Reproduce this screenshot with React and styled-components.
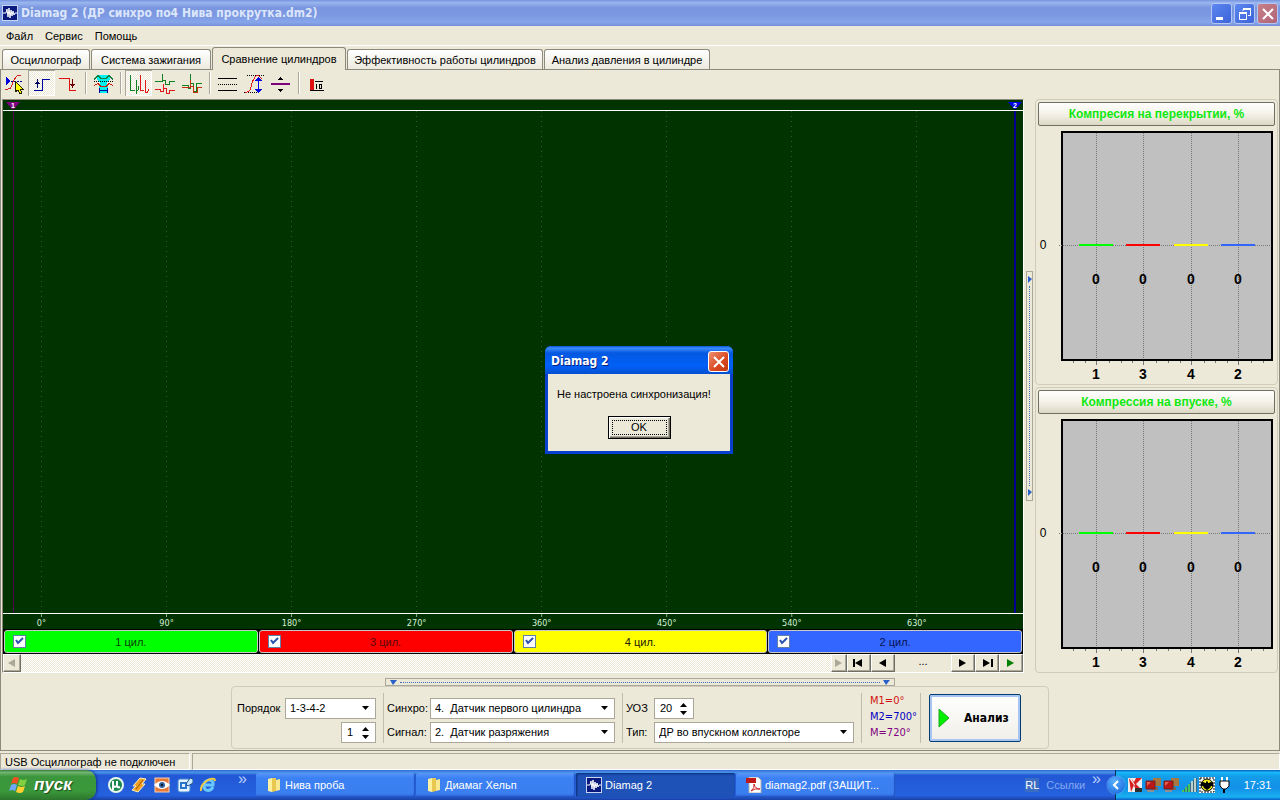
import React, { useState } from "react";
import styled, { createGlobalStyle } from "styled-components";

const tabs = [
  { name: "Осциллограф", width: 88 },
  { name: "Система зажигания", width: 120 },
  { name: "Сравнение цилиндров", width: 134 },
  { name: "Эффективность работы цилиндров", width: 196 },
  { name: "Анализ давления в цилиндре", width: 166 },
];
const cylinders = [
  { name: "1 цил.", color: "#00ff00", ink: "#064006" },
  { name: "3 цил.", color: "#ff0000", ink: "#5a0808" },
  { name: "4 цил.", color: "#ffff00", ink: "#202000" },
  { name: "2 цил.", color: "#3366ff", ink: "#0a1450" },
];
const degrees = [0, 90, 180, 270, 360, 450, 540, 630];
// share of the scope width where a given angle is drawn
const angleX = (deg) => `${3.77 + (deg / 90) * 12.26}%`;

const LogoIcon = () => (
  <svg width="16" height="16" viewBox="0 0 16 16">
    <rect width="16" height="16" fill="#c8d4f4" />
    <rect x="1" y="1" width="14" height="14" fill="#0a1a7c" />
    <path d="M1 8H4L5 4L6 12L7 3L8 13L9 5L10 11L11 6L12 10L13 8H15" fill="none" stroke="#fff" />
  </svg>
);

const toolIcons = {
  cursor: (
    <>
      <path d="M4 18H7Q10 18 11 14T15 6Q16 4 20 4" fill="none" stroke="#d02020" />
      <path d="M5 6V14L10 10Z" fill="#0000e0" />
      <path d="M10 10.5H22" stroke="#0000a0" strokeDasharray="2 1" />
      <path d="M14 10V21L17 19L19 23L21 22L19 18H22Z" fill="#ffff00" stroke="#202000" />
    </>
  ),
  rise: (
    <>
      <path d="M6 19.5H14.5V8.5H22" fill="none" stroke="#0000a0" />
      <path d="M9.5 8V17" stroke="#000060" />
      <path d="M7 13L9.5 9L12 13Z" fill="#000060" />
    </>
  ),
  fall: (
    <>
      <path d="M4 7.5H14.5V19.5H21" fill="none" stroke="#e01010" />
      <path d="M17.5 8V17" stroke="#700000" />
      <path d="M15 13L17.5 17L20 13Z" fill="#700000" />
    </>
  ),
  zone: (
    <>
      <path d="M7 4H20V8L17 12L18 16V22H9V16L10 12L7 8Z" fill="#00f0f0" />
      <path d="M4 8.5L8 4.5L11 7.5H16L19 4.5L23 8.500" fill="none" stroke="#108040" />
      <path d="M4 14.5L8 12.5L11 15.5H16L19 12.5L23 14.500" fill="none" stroke="#c02010" />
      <path d="M4 10.5H23" stroke="#000" strokeDasharray="1 1" />
      <path d="M9.5 17V22M17.5 17V22M10 19.5H17" stroke="#0000a0" />
    </>
  ),
  chain: (
    <>
      <path d="M5.5 4V19.5H10M11.5 9V23M11 19.5H13M13.5 15V19" fill="none" stroke="#108020" />
      <path d="M15.500 4V19.5H19M20.500 9V22M20 21.5H22L24 18" fill="none" stroke="#e01818" />
    </>
  ),
  stacked: (
    <>
      <path d="M3 10.5H10.5V3V9.5H13.5V13.5H17.5V10.5H23" fill="none" stroke="#108020" />
      <path d="M3 18.5H8.5V20.5H11.5V13V17.5H14.5V22.5H17.5V19.5H23" fill="none" stroke="#e01818" />
    </>
  ),
  overlay: (
    <>
      <path d="M3 14.5H9.5V17.5H11.5V3V12.5H14.5V20.5H17.5V12.5H23" fill="none" stroke="#108020" />
      <path d="M3 16.5H11.5V9V15.5H14.5V21.5H18.5V16.5H23" fill="none" stroke="#c03010" />
    </>
  ),
  lines: (
    <>
      <path d="M4 7.5H23M4 19.5H23" stroke="#000" />
      <path d="M4 13.5H23" stroke="#000" strokeDasharray="1 1" />
    </>
  ),
  amplitude: (
    <>
      <path d="M6 4.5H23M3 21.5H19" stroke="#000" strokeDasharray="1 1" />
      <path d="M4 21Q9 22 10 16T14 6Q16 2 21 8" fill="none" stroke="#e01818" />
      <path d="M17.5 8V20" stroke="#0000e0" />
      <path d="M14 10L17.500 6L21 10ZM14 18L17.500 22L21 18Z" fill="#0000e0" />
    </>
  ),
  spread: (
    <>
      <path d="M3 13H22" stroke="#800080" strokeWidth="2" />
      <path d="M10 9L12.5 6L15 9ZM10 18L12.5 21L15 18Z" fill="#000" />
    </>
  ),
  level: (
    <>
      <path d="M7 8H11V19H7Z" fill="#e01010" />
      <path d="M7 19.5H21M12 10.5H20M13.5 13V18M16.5 13.5H18.5V17.5H16.5Z" fill="none" stroke="#000" />
    </>
  ),
};
const tools = [
  ["cursor", "Курсор"],
  ["rise", "Фронт", true],
  ["fall", "Спад"],
  null,
  ["zone", "Зона"],
  null,
  ["chain", "Последовательно", true],
  ["stacked", "Раздельно"],
  ["overlay", "Наложение"],
  null,
  ["lines", "Линии"],
  ["amplitude", "Амплитуда"],
  ["spread", "Сдвиг"],
  null,
  ["level", "Уровень"],
];

const Arrow = ({ dir, color = "#000", bar }) => {
  const paths = {
    left: "M9 1V9L2 5Z",
    right: "M2 1V9L9 5Z",
    down: "M2 3H9L5.500 7Z",
    up: "M2 7H9L5.500 3Z",
  };
  return (
    <svg width="12" height="10" viewBox="0 0 12 10">
      <path d={paths[dir]} fill={color} />
      {bar && <rect x={dir === "left" ? 0 : 10} y="1" width="2" height="8" fill={color} />}
    </svg>
  );
};

const Gauge = ({ title }) => (
  <Group>
    <GaugeTitle>{title}</GaugeTitle>
    <svg width="238" height="256" viewBox="0 0 238 256" shapeRendering="crispEdges">
      <rect x="24" y="6" width="210" height="228" fill="#c0c0c0" stroke="#000" strokeWidth="2" />
      {[35, 47, 71, 83, 94, 118, 130, 142, 166, 177, 189, 213, 225].map((x) => (
        <path key={x} d={`M${x}.5 235V237`} stroke="#777" />
      ))}
      <path d="M21 119.5H233" stroke="#777" strokeDasharray="1 1" />
      <GaugeText x="5" y="123">0</GaugeText>
      {[1, 3, 4, 2].map((cyl, i) => {
        const x = 58 + Math.round(i * 47.3);
        return (
          <g key={cyl}>
            <path d={`M${x}.5 7V233`} stroke="#777" strokeDasharray="1 1" />
            <path d={`M${x}.5 235V239`} stroke="#777" />
            <rect x={x - 17} y="118" width="34" height="2" fill={cylinders[i].color} />
            <GaugeText x={x} y="158" $bold>0</GaugeText>
            <GaugeText x={x} y="253" $bold>{cyl}</GaugeText>
          </g>
        );
      })}
    </svg>
  </Group>
);

const Combo = ({ id, options, width }) => (
  <ComboBox $width={width}>
    <ComboSelect id={id}>
      {options.map((o) => (
        <option key={o}>{o}</option>
      ))}
    </ComboSelect>
    <Arrow dir="down" />
  </ComboBox>
);

const Spinner = ({ id, label, start, width }) => {
  const [value, setValue] = useState(start);
  return (
    <SpinBox $width={width}>
      <SpinInput
        id={id}
        aria-label={label}
        value={value}
        onChange={(e) => setValue(Number(e.target.value) || 0)}
      />
      <SpinButtons>
        <button type="button" aria-label="Больше" onClick={() => setValue(value + 1)}>
          <Arrow dir="up" />
        </button>
        <button type="button" aria-label="Меньше" onClick={() => setValue(value - 1)}>
          <Arrow dir="down" />
        </button>
      </SpinButtons>
    </SpinBox>
  );
};

const FolderIcon = () => (
  <svg width="16" height="16" viewBox="0 0 16 16">
    <path d="M2 2L6 1V15L2 14Z" fill="#fff0a0" />
    <path d="M6 1H10V14L6 15Z" fill="#e8c850" />
    <path d="M10 3L14 2V13L10 14Z" fill="#f8e890" />
  </svg>
);
const PdfIcon = () => (
  <svg width="16" height="16" viewBox="0 0 16 16">
    <path d="M3 0H12L15 3V16H3Z" fill="#fff" stroke="#b0b0b0" />
    <rect x="0" y="1" width="10" height="5" fill="#c01818" />
    <path d="M5 14Q9 11 8 7Q9 12 14 12Q9 11 5 14" fill="none" stroke="#d02020" />
  </svg>
);
const WindowsIcon = () => (
  <svg width="20" height="20" viewBox="0 0 20 20">
    <path d="M4 3Q7 1 10 3L8 9Q5 7 2 9Z" fill="#f05020" />
    <path d="M11 4Q14 6 18 4L16 10Q13 12 9 10Z" fill="#80d040" />
    <path d="M2 10Q5 8 8 10L6 16Q3 14 0 16Z" fill="#70a8ff" />
    <path d="M9 11Q12 13 16 11L14 17Q11 19 7 17Z" fill="#ffd030" />
  </svg>
);
const quickIcons = [
  <>
    <circle cx="8" cy="8" r="8" fill="#e8f8ec" />
    <circle cx="8" cy="8" r="6" fill="#18884c" />
    <path d="M5 4V8Q6 11 9 9V4M9 9Q10 11 12 10M5 8V13" fill="none" stroke="#fff" strokeWidth="2" />
  </>,
  <>
    <path d="M9 1L15 2L11 7H14L7 15L1 13L5 9H2Z" fill="#f0a020" stroke="#fff0c0" />
    <path d="M12 3L5 12" stroke="#a05808" />
  </>,
  <>
    <rect x="1" y="1" width="14" height="14" fill="#e87838" stroke="#f8d0b0" />
    <path d="M0 8Q8 0 16 8Q8 16 0 8Z" fill="#fff" />
    <circle cx="8" cy="8" r="3" fill="#3060a0" />
    <circle cx="8" cy="8" r="1" fill="#000" />
  </>,
  <>
    <rect x="1" y="2" width="12" height="13" rx="2" fill="#e8f4ff" stroke="#4088d0" />
    <path d="M4 6H9V11H4Z" fill="none" stroke="#2878d0" strokeWidth="2" />
    <path d="M9 7L13 1L16 2V6L11 9Z" fill="#c8e8ff" stroke="#205090" />
  </>,
  <>
    <path d="M13 10Q10 15 6 13Q2 10 5 5Q9 1 13 5V8H5" fill="none" stroke="#68c8ff" strokeWidth="3" />
    <path d="M1 14Q0 8 8 3Q15 0 15 4" fill="none" stroke="#f0c840" strokeWidth="2" />
  </>,
];
const Computers = (
  <>
    <path d="M8 1H16V9H8Z" fill="#a87840" />
    <path d="M7 10H13V13H7Z" fill="#806858" />
    <path d="M1 4H10V12H1Z" fill="#b81818" stroke="#782020" />
    <path d="M2 13H9V15H2Z" fill="#909090" />
    <path d="M2 5H6L2 9Z" fill="#e86050" />
  </>
);
const trayIcons = [
  <>
    <rect x="1" y="1" width="14" height="14" fill="#f0f0f0" />
    <path d="M2 1L4 15L7 8ZM4 1L8 8L15 1H9L7 5ZM7 9L9 12H14L9 7Z" fill="#d82020" />
    <path d="M8 11H15V15H8Z" fill="#303030" />
  </>,
  Computers,
  Computers,
  <>
    <path d="M1 13H3V15H1ZM4 10H6V15H4ZM7 7H9V15H7Z" fill="#40c860" />
    <path d="M10 4H12V15H10ZM13 1H15V15H13Z" fill="#b8d0d0" />
    <path d="M3.500 12V15M6.500 9V15M9.500 6V15M12.500 3V15M15.500 1V15" stroke="#406878" />
  </>,
  <>
    <rect width="16" height="16" fill="#fff" />
    <rect x="1" y="1" width="14" height="14" fill="none" stroke="#000" strokeDasharray="2 1" />
    <circle cx="8" cy="8" r="6" fill="#f0e820" stroke="#000" />
    <path d="M2 6Q4 4 6 6H7V4L8 5L9 4V6H10Q12 4 14 6V9L12 9L11 11L8 13L5 11L4 9H2Z" fill="#000" />
  </>,
  <>
    <path d="M5 0V4M10 0V4" stroke="#fff" strokeWidth="2" />
    <path d="M3 4H12V9L9 12H6L3 9Z" fill="#fff" stroke="#000" />
    <path d="M7 12V16" stroke="#000" strokeWidth="2" />
  </>,
];
const SmallIcon = ({ children }) => (
  <svg width="16" height="16" viewBox="0 0 16 16">
    {children}
  </svg>
);

const App = () => {
  const [open, setOpen] = useState(true);
  return (
    <Window>
      <Globals />
      <TitleBar>
        <LogoIcon />
        <Title>Diamag 2 (ДР синхро по4 Нива прокрутка.dm2)</Title>
        <CaptionButton aria-label="Свернуть">
          <svg width="20" height="20"><rect x="4" y="13" width="7" height="3" fill="#fff" /></svg>
        </CaptionButton>
        <CaptionButton aria-label="Восстановить">
          <svg width="20" height="20" fill="none" stroke="#fff">
            <path d="M4.500 9.500H11.500V15.500H4.500ZM4 8.500H12M8 7V5.500H15.500V11.500H13M8 4.500H16" />
          </svg>
        </CaptionButton>
        <CaptionButton aria-label="Закрыть" $close $faded>
          <svg width="20" height="20"><path d="M5 5L15 15M15 5L5 15" stroke="#fff" strokeWidth="2" /></svg>
        </CaptionButton>
      </TitleBar>
      <Menu>
        <button type="button">Файл</button>
        <button type="button">Сервис</button>
        <button type="button">Помощь</button>
      </Menu>
      <Tabs role="tablist">
        {tabs.map((t, i) => (
          <Tab key={t.name} role="tab" aria-selected={i === 2} $active={i === 2} $width={t.width}>
            {t.name}
          </Tab>
        ))}
      </Tabs>
      <Page>
        <Toolbar>
          {tools.map((tool, i) =>
            tool ? (
              <ToolButton key={i} aria-label={tool[1]} $pressed={tool[2]}>
                <svg width="27" height="25" viewBox="0 0 27 25" shapeRendering="crispEdges">
                  {toolIcons[tool[0]]}
                </svg>
              </ToolButton>
            ) : (
              <ToolDivider key={i} />
            )
          )}
        </Toolbar>
        <Work>
          <ScopeColumn>
            <Scope>
              <ScopeHead>
                <svg width="14" height="10" viewBox="0 0 14 10">
                  <path d="M0 2H14L8 9H6Z" fill="#800080" />
                  <MarkText x="7" y="8">1</MarkText>
                </svg>
                <svg width="14" height="10" viewBox="0 0 14 10">
                  <path d="M0 2H14L8 9H6Z" fill="#0000e0" />
                  <MarkText x="7" y="8">2</MarkText>
                </svg>
              </ScopeHead>
              <Plot>
                <svg width="100%" height="100%" shapeRendering="crispEdges">
                  {degrees.map((d) => (
                    <line key={d} x1={angleX(d)} x2={angleX(d)} y1="0" y2="100%" stroke="#2f5a2f" strokeDasharray="1 4" />
                  ))}
                </svg>
              </Plot>
              <ScopeAxis>
                <svg width="100%" height="15">
                  {degrees.map((d) => (
                    <g key={d}>
                      <line x1={angleX(d)} x2={angleX(d)} y1="0" y2="3" stroke="#8aa88a" />
                      <AxisText x={angleX(d)} y="12">{d}°</AxisText>
                    </g>
                  ))}
                </svg>
              </ScopeAxis>
            </Scope>
            <Cylinders>
              {cylinders.map((c) => (
                <Cylinder key={c.name} $color={c.color} $ink={c.ink}>
                  <input type="checkbox" defaultChecked />
                  <svg width="13" height="13" viewBox="0 0 13 13">
                    <path d="M3 5L5 8L10 3" fill="none" stroke="#2850b0" strokeWidth="2" />
                  </svg>
                  <span>{c.name}</span>
                </Cylinder>
              ))}
            </Cylinders>
            <ScrollRow>
              <NavButton $width={18} disabled aria-label="Влево"><Arrow dir="left" color="#aca899" /></NavButton>
              <Track />
              <NavButton $width={16} disabled aria-label="Вправо"><Arrow dir="right" color="#aca899" /></NavButton>
              <NavButton $width={24} aria-label="В начало"><Arrow dir="left" bar /></NavButton>
              <NavButton $width={24} aria-label="Назад"><Arrow dir="left" /></NavButton>
              <Dots>...</Dots>
              <NavButton $width={24} aria-label="Вперёд"><Arrow dir="right" /></NavButton>
              <NavButton $width={24} aria-label="В конец"><Arrow dir="right" bar /></NavButton>
              <NavButton $width={24} aria-label="Пуск"><Arrow dir="right" color="#008000" /></NavButton>
            </ScrollRow>
          </ScopeColumn>
          <SideSplitter>
            <svg width="5" height="7"><path d="M1 0L5 3L1 7Z" fill="#2860c8" /></svg>
            <i />
            <svg width="5" height="7"><path d="M1 0L5 3L1 7Z" fill="#2860c8" /></svg>
          </SideSplitter>
          <Gauges>
            <Gauge title="Компресия на перекрытии, %" />
            <Gauge title="Компрессия на впуске, %" />
          </Gauges>
        </Work>
        <BottomSplitter>
          <svg width="7" height="5"><path d="M0 0H7L3 5Z" fill="#2860c8" /></svg>
          <i />
          <svg width="7" height="5"><path d="M0 0H7L3 5Z" fill="#2860c8" /></svg>
        </BottomSplitter>
        <Settings>
          <Fields $columns="48px 91px">
            <label htmlFor="order">Порядок</label>
            <Combo id="order" options={["1-3-4-2", "1-2-4-3"]} width={91} />
            <span />
            <RightCell>
              <Spinner label="Номер цилиндра" start={1} width={35} />
            </RightCell>
          </Fields>
          <Fields $columns="43px 185px">
            <label htmlFor="sync">Синхро:</label>
            <Combo id="sync" options={["4.\u00a0 Датчик первого цилиндра"]} width={185} />
            <label htmlFor="signal">Сигнал:</label>
            <Combo id="signal" options={["2.\u00a0 Датчик разряжения"]} width={185} />
          </Fields>
          <Fields $columns="28px 200px">
            <label htmlFor="angle">УОЗ</label>
            <Spinner id="angle" start={20} width={40} />
            <label htmlFor="kind">Тип:</label>
            <Combo id="kind" options={["ДР во впускном коллекторе"]} width={200} />
          </Fields>
          <Marks>
            <Mark $color="#d01010">M1=0°</Mark>
            <Mark $color="#0000c0">M2=700°</Mark>
            <Mark $color="#800080">M=720°</Mark>
          </Marks>
          <Analyze>
            <svg width="12" height="20"><path d="M1 1L11 10L1 19Z" fill="#00f000" stroke="#20a820" /></svg>
            <span>Анализ</span>
          </Analyze>
        </Settings>
      </Page>
      <StatusBar>
        <StatusCell $width={190}>USB Осциллограф не подключен</StatusCell>
        <StatusCell />
      </StatusBar>
      <TaskBar>
        <Start>
          <WindowsIcon />
          пуск
        </Start>
        <Quick>
          {quickIcons.map((icon, i) => (
            <button key={i} type="button" aria-label={`Ярлык ${i + 1}`}>
              <SmallIcon>{icon}</SmallIcon>
            </button>
          ))}
          <More>»</More>
        </Quick>
        <Tasks>
          <Task><FolderIcon />Нива проба</Task>
          <Task><FolderIcon />Диамаг Хельп</Task>
          <Task $active><LogoIcon />Diamag 2</Task>
          <Task><PdfIcon />diamag2.pdf (ЗАЩИТ...</Task>
        </Tasks>
        <Lang>RL</Lang>
        <Links href="#links">Ссылки</Links>
        <More>»</More>
        <Tray>
          <TrayToggle aria-label="Показать значки">
            <svg width="8" height="10"><path d="M6 1L2 5L6 9" fill="none" stroke="#fff" strokeWidth="2" /></svg>
          </TrayToggle>
          {trayIcons.map((icon, i) => (
            <SmallIcon key={i}>{icon}</SmallIcon>
          ))}
          <Clock>17:31</Clock>
        </Tray>
      </TaskBar>
      {open && (
        <Dialog role="alertdialog" aria-label="Diamag 2">
          <DialogTitle>
            <span>Diamag 2</span>
            <CaptionButton aria-label="Закрыть окно" $close onClick={() => setOpen(false)}>
              <svg width="20" height="20"><path d="M5 5L15 15M15 5L5 15" stroke="#fff" strokeWidth="2" /></svg>
            </CaptionButton>
          </DialogTitle>
          <DialogBody>
            <p>Не настроена синхронизация!</p>
            <OkButton onClick={() => setOpen(false)}>
              <span>OK</span>
            </OkButton>
          </DialogBody>
        </Dialog>
      )}
    </Window>
  );
};

const Globals = createGlobalStyle`
  * {
    box-sizing: border-box;
  }
  body {
    margin: 0;
    background: #ece9d8;
  }
  body, button, input, select {
    font-family: "Liberation Sans", Arial, sans-serif;
    font-size: 11px;
    line-height: 14px;
    color: #000;
  }
  button {
    padding: 0;
    border: none;
    background: none;
  }
  svg {
    display: block;
    flex: none;
  }
`;
const Window = styled.div`
  min-height: 100vh;
  display: flex;
  flex-direction: column;
  background: #ece9d8;
`;
const TitleBar = styled.header`
  height: 26px;
  display: flex;
  align-items: center;
  gap: 2px;
  padding: 0 2px;
  background: linear-gradient(#7593e0 0%, #9ab6ee 10%, #7a96df 30%, #7c98e2 60%, #87a6ea 85%, #7590dc 100%);
`;
const Title = styled.h1`
  flex: 1;
  margin: 0 0 0 1px;
  font-family: "DejaVu Sans Condensed", sans-serif;
  font-size: 12px;
  line-height: 16px;
  font-weight: bold;
  color: #dce6fa;
`;
const CaptionButton = styled.button`
  width: 21px;
  height: 21px;
  display: grid;
  place-items: center;
  border: 1px solid ${(p) => (p.$faded || !p.$close ? "#b4c6f4" : "#fff")};
  border-radius: 3px;
  background: ${(p) =>
    p.$close
      ? p.$faded
        ? "linear-gradient(135deg, #c88088, #b06478)"
        : "linear-gradient(135deg, #f09070, #d84820 60%, #c03810)"
      : "linear-gradient(135deg, #5c86f0, #3c64d8)"};
`;
const Menu = styled.nav`
  height: 20px;
  display: flex;
  align-items: center;
  gap: 12px;
  padding: 0 6px;
  border-bottom: 1px solid #fff;
`;
const Tabs = styled.div`
  height: 24px;
  display: flex;
  align-items: flex-end;
  gap: 1px;
  padding-left: 2px;
  border-bottom: 1px solid #8c8a7c;
`;
const Tab = styled.button`
  width: ${(p) => p.$width}px;
  height: ${(p) => (p.$active ? 23 : 20)}px;
  margin-bottom: ${(p) => (p.$active ? -1 : 0)}px;
  white-space: nowrap;
  border: 1px solid #8c8a7c;
  border-bottom: none;
  border-radius: 3px 3px 0 0;
  background: ${(p) => (p.$active ? "#ece9d8" : "linear-gradient(#fff, #eceade)")};
`;
const Page = styled.main`
  flex: 1;
  display: flex;
  flex-direction: column;
  border: 1px solid #8c8a7c;
  border-top: none;
`;
const Toolbar = styled.div`
  height: 29px;
  display: flex;
  align-items: flex-start;
`;
const ToolButton = styled.button`
  width: 27px;
  height: 26px;
  background: ${(p) =>
    p.$pressed ? "repeating-conic-gradient(#fff 0 25%, #ece9d8 0 50%) 0 0 / 2px 2px" : "none"};
  box-shadow: ${(p) => (p.$pressed ? "inset 1px 1px #aca899, inset -1px -1px #fff" : "none")};
`;
const ToolDivider = styled.div`
  width: 2px;
  height: 22px;
  margin: 2px 3px;
  border-left: 1px solid #aca899;
  border-right: 1px solid #fff;
`;
const Work = styled.div`
  flex: 1;
  display: flex;
  padding: 0 1px;
`;
const ScopeColumn = styled.div`
  flex: 1;
  min-width: 0;
  display: flex;
  flex-direction: column;
  border: 1px solid #8c8a7c;
  border-right-color: #fff;
  border-bottom-color: #fff;
`;
const Scope = styled.div`
  flex: 1;
  display: flex;
  flex-direction: column;
  background: #003300;
`;
const ScopeHead = styled.div`
  height: 10px;
  display: flex;
  justify-content: space-between;
  padding: 0 1px 0 3px;
`;
const Plot = styled.div`
  flex: 1;
  min-height: 200px;
  display: flex;
  border-top: 1px solid #fff;
  border-bottom: 1px solid #fff;
  background: linear-gradient(#500050, #500050) 10px 0 / 1px 100% no-repeat,
    linear-gradient(#000090, #000090) calc(100% - 7px) 0 / 2px 100% no-repeat;
`;
const ScopeAxis = styled.div`
  height: 15px;
`;
const AxisText = styled.text`
  font-family: "DejaVu Sans Condensed", sans-serif;
  font-size: 9px;
  fill: #d8f0d8;
  text-anchor: middle;
`;
const MarkText = styled.text`
  font-size: 7px;
  font-weight: bold;
  fill: #fff;
  text-anchor: middle;
`;
const Cylinders = styled.div`
  height: 25px;
  display: flex;
  gap: 1px;
  padding: 1px;
  background: #000;
`;
const Cylinder = styled.label`
  flex: 1;
  display: grid;
  align-items: center;
  border: 1px solid #c8c8c8;
  border-radius: 3px;
  background: ${(p) => p.$color};
  color: ${(p) => p.$ink};
  > * {
    grid-area: 1 / 1;
  }
  input {
    appearance: none;
    width: 13px;
    height: 13px;
    margin: 0 0 0 8px;
    border: 1px solid #6080a8;
    background: #fff;
  }
  svg {
    margin-left: 8px;
    visibility: hidden;
    pointer-events: none;
  }
  input:checked + svg {
    visibility: visible;
  }
  span {
    justify-self: center;
  }
`;
const ScrollRow = styled.div`
  height: 18px;
  display: flex;
`;
const NavButton = styled.button`
  width: ${(p) => p.$width}px;
  display: grid;
  place-items: center;
  background: #ece9d8;
  border: 1px solid;
  border-color: #fff #716f64 #716f64 #fff;
  box-shadow: inset -1px -1px #aca899;
`;
const Track = styled.div`
  flex: 1;
  background: repeating-conic-gradient(#fff 0 25%, #ece9d8 0 50%) 0 0 / 2px 2px;
`;
const Dots = styled.span`
  width: 56px;
  text-align: center;
`;
const SideSplitter = styled.div`
  width: 7px;
  height: 230px;
  margin: 0 2px;
  align-self: center;
  display: flex;
  flex-direction: column;
  align-items: center;
  padding: 4px 0;
  gap: 3px;
  border: 1px solid #aca899;
  i {
    flex: 1;
    border-left: 1px dotted #4070b8;
  }
`;
const BottomSplitter = styled.div`
  width: 510px;
  height: 8px;
  margin: 5px auto 0;
  display: flex;
  align-items: center;
  padding: 0 4px;
  gap: 3px;
  border: 1px solid #aca899;
  i {
    flex: 1;
    border-top: 1px dotted #4070b8;
  }
`;
const Gauges = styled.div`
  width: 243px;
  display: flex;
  flex-direction: column;
  justify-content: space-between;
`;
const Group = styled.section`
  height: 286px;
  padding: 2px;
  border: 1px solid #cfccbb;
  border-radius: 4px;
`;
const GaugeTitle = styled.h2`
  height: 24px;
  margin: 0;
  font-size: 12px;
  line-height: 22px;
  font-weight: bold;
  text-align: center;
  color: #10e810;
  border: 1px solid #716f64;
  border-radius: 2px;
  background: linear-gradient(#fff, #f4f2e8 50%, #dcd8c4);
`;
const GaugeText = styled.text`
  font-size: ${(p) => (p.$bold ? 14 : 12)}px;
  font-weight: ${(p) => (p.$bold ? "bold" : "normal")};
  text-anchor: middle;
`;
const Settings = styled.form`
  width: 818px;
  height: 63px;
  margin: 0 auto 1px;
  display: flex;
  align-items: center;
  padding: 0 5px;
  border: 1px solid #cfccbb;
  border-radius: 4px;
`;
const Fields = styled.div`
  height: 50px;
  display: grid;
  grid-template-columns: ${(p) => p.$columns};
  align-items: center;
  align-content: end;
  row-gap: 3px;
  padding-right: 7px;
  margin-right: 3px;
  border-right: 1px solid #c0bdac;
  label {
    white-space: nowrap;
  }
`;
const RightCell = styled.div`
  justify-self: end;
`;
const ComboBox = styled.div`
  width: ${(p) => p.$width}px;
  height: 21px;
  display: grid;
  align-items: center;
  border: 1px solid #aca899;
  background: #fff;
  > * {
    grid-area: 1 / 1;
  }
  svg {
    justify-self: end;
    margin-right: 3px;
    pointer-events: none;
  }
`;
const ComboSelect = styled.select`
  appearance: none;
  width: 100%;
  height: 19px;
  padding: 0 16px 0 4px;
  border: none;
  outline: none;
  background: none;
`;
const SpinBox = styled.div`
  width: ${(p) => p.$width}px;
  height: 21px;
  display: flex;
  border: 1px solid #aca899;
  background: #fff;
`;
const SpinInput = styled.input`
  flex: 1;
  min-width: 0;
  padding: 0 0 0 5px;
  border: none;
  outline: none;
  background: none;
`;
const SpinButtons = styled.div`
  display: flex;
  flex-direction: column;
  justify-content: center;
  padding-right: 3px;
  button {
    height: 8px;
    display: grid;
    place-items: center;
  }
`;
const Marks = styled.div`
  width: 56px;
  height: 50px;
  margin-right: 8px;
  padding-left: 5px;
  border-right: 1px solid #c0bdac;
`;
const Mark = styled.p`
  margin: 0;
  font-family: "DejaVu Sans Condensed", sans-serif;
  font-size: 11px;
  line-height: 16px;
  color: ${(p) => p.$color};
`;
const Analyze = styled.button`
  width: 92px;
  height: 48px;
  display: flex;
  align-items: center;
  gap: 14px;
  padding-left: 8px;
  font-family: "DejaVu Sans Condensed", sans-serif;
  font-size: 12px;
  font-weight: bold;
  border: 1px solid #003c74;
  border-radius: 2px;
  background: linear-gradient(#fff, #f0efe8);
  box-shadow: inset 0 0 0 2px #a8c4f0;
`;
const StatusBar = styled.footer`
  height: 19px;
  display: flex;
  gap: 2px;
  padding-top: 2px;
`;
const StatusCell = styled.div`
  width: ${(p) => (p.$width ? p.$width + "px" : "auto")};
  flex: ${(p) => (p.$width ? "none" : 1)};
  padding-left: 4px;
  line-height: 16px;
  white-space: nowrap;
  border: 1px solid #aca899;
  border-right-color: #fff;
  border-bottom-color: #fff;
`;
const TaskBar = styled.footer`
  height: 30px;
  display: flex;
  align-items: stretch;
  color: #fff;
  background: linear-gradient(#3168d5 0%, #4993e6 8%, #2257d5 18%, #245edb 60%, #2560dd 85%, #1941a5 100%);
`;
const Start = styled.button`
  width: 96px;
  display: flex;
  align-items: center;
  gap: 5px;
  padding-left: 9px;
  font-size: 17px;
  line-height: 20px;
  font-style: italic;
  font-weight: bold;
  color: #fff;
  text-shadow: 1px 1px 1px #1c4a1c;
  border-radius: 0 10px 10px 0;
  background: linear-gradient(#388038 0%, #71b571 8%, #3c963c 22%, #3a993a 70%, #2c742c 100%);
  box-shadow: 1px 0 3px #10308a;
`;
const Quick = styled.div`
  width: 160px;
  display: flex;
  align-items: center;
  gap: 7px;
  padding-left: 12px;
  > span {
    margin-left: 15px;
  }
`;
const More = styled.span`
  align-self: flex-start;
  font-size: 16px;
  line-height: 18px;
  color: #b8d0ff;
`;
const Tasks = styled.div`
  flex: 1;
  display: flex;
  align-items: center;
  gap: 1px;
`;
const Task = styled.button`
  width: 159px;
  height: 24px;
  display: flex;
  align-items: center;
  gap: 3px;
  padding-left: 10px;
  overflow: hidden;
  white-space: nowrap;
  color: #fff;
  border-radius: 2px;
  background: ${(p) => (p.$active ? "#1e52b7" : "linear-gradient(#5a96f8, #3c81f3 20%, #3a7ef0 85%, #2c66d8)")};
  box-shadow: ${(p) => (p.$active ? "inset 1px 1px 2px #0c2c78" : "inset -1px -1px 1px #2454c0")};
`;
const Lang = styled.span`
  align-self: center;
  background: #3a6cc4;
`;
const Links = styled.a`
  align-self: center;
  margin: 0 7px;
  color: #86a8f0;
  text-decoration: none;
`;
const Tray = styled.div`
  width: 165px;
  display: flex;
  align-items: center;
  gap: 2px;
  margin-left: 14px;
  border-left: 1px solid #092e51;
  background: linear-gradient(#0c59b9 0%, #18b9fb 8%, #139ee9 20%, #1290e8 60%, #19b0f0 90%, #095bc9 100%);
`;
const TrayToggle = styled.button`
  width: 18px;
  height: 18px;
  margin-left: -9px;
  display: grid;
  place-items: center;
  border-radius: 50%;
  background: radial-gradient(circle at 40% 30%, #58b0ff, #1060d8);
  box-shadow: 0 0 1px #fff;
`;
const Clock = styled.time`
  margin: 0 auto;
`;
const Dialog = styled.section`
  position: fixed;
  top: 50%;
  left: 50%;
  width: 188px;
  transform: translate(-95px, -54px);
  border: 3px solid #0840d0;
  border-top: none;
  border-radius: 6px 6px 0 0;
  background: #ece9d8;
`;
const DialogTitle = styled.header`
  height: 28px;
  margin: 0 -3px;
  display: flex;
  align-items: center;
  justify-content: space-between;
  padding: 2px 4px 0 6px;
  font-family: "DejaVu Sans Condensed", sans-serif;
  font-size: 12px;
  font-weight: bold;
  color: #fff;
  text-shadow: 1px 1px #0a2080;
  border-radius: 6px 6px 0 0;
  background: linear-gradient(#0858d8 0%, #3c8cff 8%, #0458e0 25%, #0060f8 70%, #0450d0 100%);
`;
const DialogBody = styled.div`
  display: flex;
  flex-direction: column;
  align-items: center;
  padding: 13px 0 12px;
  p {
    align-self: flex-start;
    margin: 0 0 15px;
    padding-left: 9px;
    white-space: nowrap;
  }
`;
const OkButton = styled.button`
  width: 63px;
  height: 23px;
  padding: 3px;
  background: #ece9d8;
  border: 1px solid #000;
  box-shadow: inset 1px 1px #fff, inset -1px -1px #716f64, inset -2px -2px #aca899;
  span {
    display: block;
    line-height: 13px;
    border: 1px dotted #000;
  }
`;

export default App;
